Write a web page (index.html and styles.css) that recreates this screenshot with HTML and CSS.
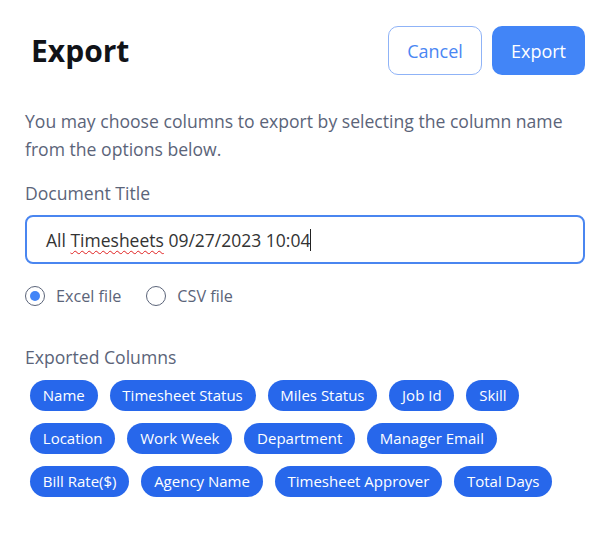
FILE: index.html
```html
<!DOCTYPE html>
<html>
    <head>
        <title>export</title>
        <link rel="stylesheet" href="styles.css">
    </head>
    <body>
        <div class='dialog'>
            <div class='header'>
                <h2>Export</h2>
                <div class='actions'>
                    <button class='btn cancel'>Cancel</button>
                    <button class='btn primary'>Export</button>
                </div>
            </div>
            <p class='intro'>You may choose columns to export by selecting the column name
            from the options below.</p>
            <label class='field-label'>Document Title</label>
            <div class='input'><span class='typo'>All <u>Timesheets</u></span> 09/27/2023 10:04<span class='caret'></span></div>
            <div class='radios'>
                <span class='radio on'><i></i>Excel file</span>
                <span class='radio'><i></i>CSV file</span>
            </div>
            <div class='field-label cols'>Exported Columns</div>
            <div class='chips'>
                <span class='chip'>Name</span>
                <span class='chip'>Timesheet Status</span>
                <span class='chip'>Miles Status</span>
                <span class='chip'>Job Id</span>
                <span class='chip'>Skill</span>
                <span class='chip'>Location</span>
                <span class='chip'>Work Week</span>
                <span class='chip'>Department</span>
                <span class='chip'>Manager Email</span>
                <span class='chip'>Bill Rate($)</span>
                <span class='chip'>Agency Name</span>
                <span class='chip'>Timesheet Approver</span>
                <span class='chip'>Total Days</span>
            </div>
        </div>
    </body>
</html>
```

FILE: styles.css
```css
body {
    margin:0;
    background:#fff;
    font:17.6px/28px 'Open Sans', sans-serif;
    color:#5b6479;
}
.dialog {
    padding:26px 29px 0 25px;
}
.header {
    display:flex;
    justify-content:space-between;
    align-items:center;
}
.header h2 {
    margin:0 0 0 6px;
    font-size:30px;
    font-weight:700;
    color:#111318;
}
.actions {
    display:flex;
    gap:10px;
}
.btn {
    height:49px;
    border-radius:10px;
    font:18px 'Open Sans', sans-serif;
    cursor:pointer;
}
.cancel {
    width:94px;
    background:#fff;
    border:1px solid #8fb3f7;
    color:#4a86f3;
}
.primary {
    width:93px;
    background:#4285f7;
    border:none;
    color:#fff;
}
.intro {
    margin:32px 0 0;
}
.field-label {
    display:block;
    margin-top:16px;
}
.input {
    margin-top:8px;
    height:45px;
    border:2px solid #4a86f0;
    border-radius:8px;
    padding:0 19px;
    display:flex;
    align-items:center;
    color:#333;
    font-size:17.5px;
    white-space:pre;
}
.input u {
    text-decoration:underline wavy #e02020;
    text-decoration-thickness:1px;
    text-underline-offset:3px;
}
.caret {
    display:inline-block;
    width:1px;
    height:22px;
    background:#222;
}
.radios {
    display:flex;
    gap:25px;
    margin-top:20px;
    font-size:16.2px;
    line-height:24px;
}
.radio {
    display:flex;
    align-items:center;
    gap:11px;
}
.radio i {
    width:18px;
    height:18px;
    border:1px solid #5b6479;
    border-radius:50%;
    box-sizing:content-box;
    position:relative;
}
.radio.on i::after {
    content:'';
    position:absolute;
    left:4px;
    top:4px;
    width:10px;
    height:10px;
    border-radius:50%;
    background:#4285f7;
}
.field-label.cols {
    margin-top:35px;
}
.chips {
    display:flex;
    flex-wrap:wrap;
    gap:12px;
    margin-top:9px;
    padding-left:5px;
    max-width:540px;
}
.chip {
    background:#2767eb;
    color:#fff;
    font-size:15px;
    line-height:31px;
    padding:0 12.8px;
    border-radius:16px;
}
```
